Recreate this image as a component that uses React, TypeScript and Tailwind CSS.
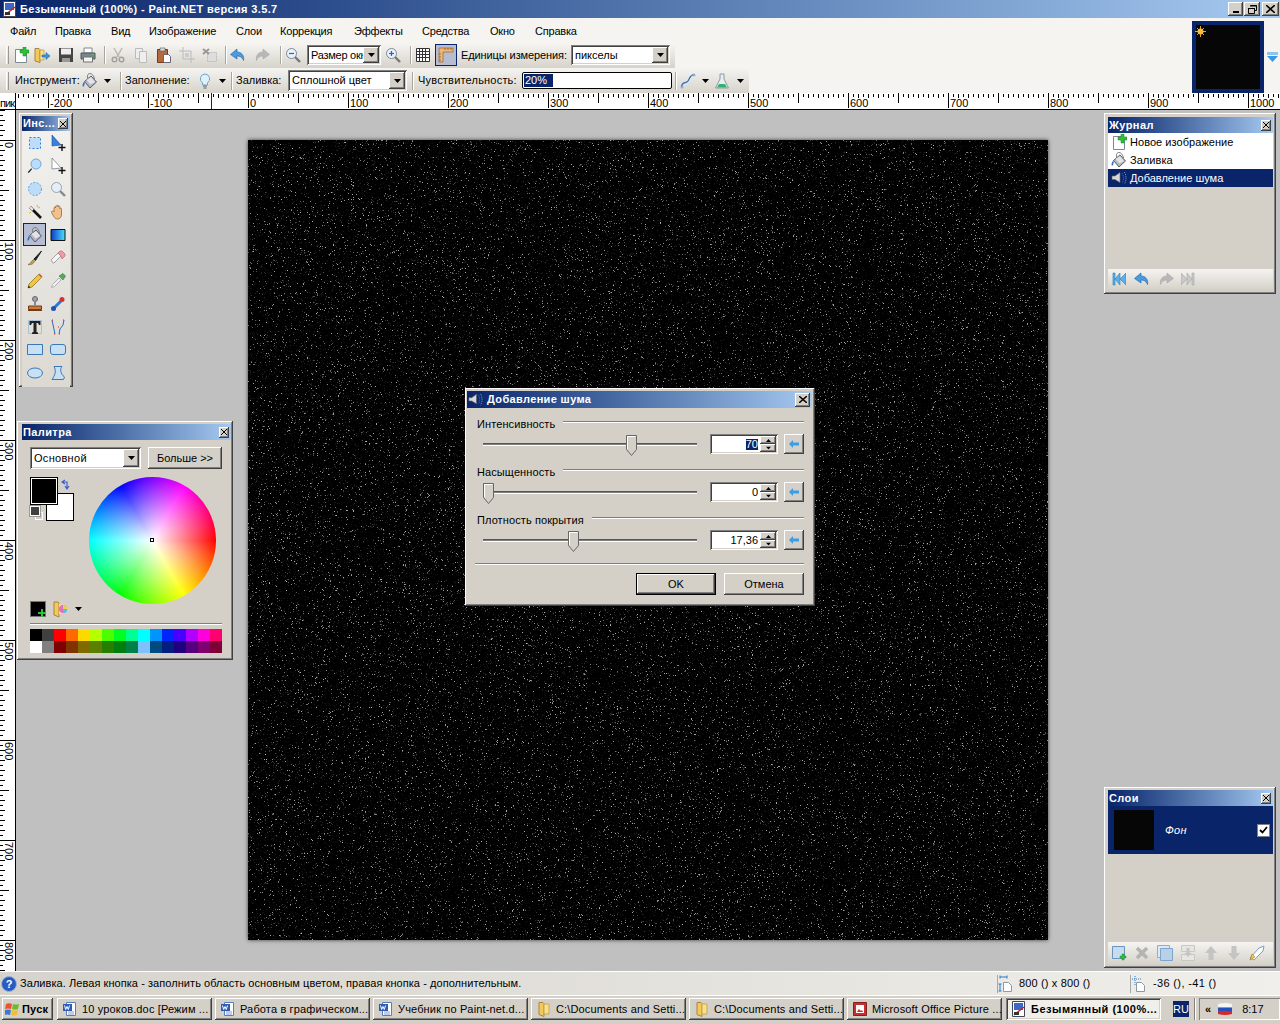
import React, { useEffect, useRef } from 'react';

const RAISED = 'shadow-[inset_-1px_-1px_0_#404040,inset_1px_1px_0_#fff,inset_-2px_-2px_0_#808080]';
const SUNKEN = 'shadow-[inset_1px_1px_0_#808080,inset_-1px_-1px_0_#fff,inset_2px_2px_0_#404040,inset_-2px_-2px_0_#d4d0c8]';
const TITLE = 'bg-gradient-to-r from-[#0a246a] to-[#a6caf0]';
const TOOLBAR = 'bg-gradient-to-b from-[#f5f4f1] to-[#d6d3cb]';

type IconProps = { className?: string; size?: number };

const Svg: React.FC<IconProps & { children: React.ReactNode }> = ({ className = '', size = 16, children }) => (
  <svg width={size} height={size} viewBox="0 0 16 16" className={`shrink-0 ${className}`}>
    {children}
  </svg>
);

const NewIcon = (p: IconProps) => (
  <Svg {...p}>
    <path d="M2.500 2.500h8l3 3v10h-11z" fill="#fff" stroke="#7c8a92" />
    <path d="M10 0h3v3h3v3h-3v3h-3V6H7V3h3z" fill="#2cc23a" stroke="#12801e" strokeWidth=".5" />
  </Svg>
);
const OpenIcon = (p: IconProps) => (
  <Svg {...p}>
    <path d="M1 1.500h4l1 1v13l-5-1.500z" fill="#f3c95c" stroke="#a8853a" />
    <path d="M6 3h4v10H6z" fill="#f8e08e" stroke="#b8963f" strokeWidth=".7" />
    <path d="M8 8h4V5.500L16 9l-4 3.500V10H8z" fill="#3b96dc" stroke="#1d5f9c" strokeWidth=".5" />
  </Svg>
);
const SaveIcon = (p: IconProps) => (
  <Svg {...p}>
    <path d="M1 1h14v14H1z" fill="#454545" />
    <path d="M3 1.500h10v6H3z" fill="#eee" />
    <path d="M4 11h8v4H4z" fill="#9a9a9a" />
  </Svg>
);
const PrintIcon = (p: IconProps) => (
  <Svg {...p}>
    <path d="M4 1h8v5H4z" fill="#fff" stroke="#808890" />
    <path d="M1 6h14v6H1z" fill="#7b858e" stroke="#50585f" />
    <path d="M3.500 10h9v5h-9z" fill="#f4f4f4" stroke="#707070" />
    <path d="M12 7.500h2" stroke="#4fd04f" />
  </Svg>
);
const CutIcon = (p: IconProps) => (
  <Svg {...p}>
    <path d="M4 1l5 9M12 1L7 10" stroke="#999" strokeWidth="1.500" fill="none" />
    <circle cx="4.500" cy="12.500" r="2.300" fill="none" stroke="#777" strokeWidth="1.400" />
    <circle cx="11.500" cy="12.500" r="2.300" fill="none" stroke="#777" strokeWidth="1.400" />
  </Svg>
);
const CopyIcon = (p: IconProps) => (
  <Svg {...p}>
    <path d="M2.500 1.500h7v10h-7z" fill="#eee" stroke="#bbb" />
    <path d="M6.500 4.500h7v11h-7z" fill="#eee" stroke="#bbb" />
  </Svg>
);
const PasteIcon = (p: IconProps) => (
  <Svg {...p}>
    <path d="M1.500 2.500h10v13h-10z" fill="#b46a3c" stroke="#6e3c1c" />
    <path d="M4 1h5v3H4z" fill="#ddd" stroke="#555" strokeWidth=".6" />
    <path d="M7.500 7.500h5l2 2v6h-7z" fill="#fff" stroke="#667" />
  </Svg>
);
const CropIcon = (p: IconProps) => (
  <Svg {...p}>
    <path d="M4 0v12h12M0 4h12v12" stroke="#bbb" fill="none" />
    <path d="M6 6h4v4H6z" fill="#ccc" />
  </Svg>
);
const DeselectIcon = (p: IconProps) => (
  <Svg {...p}>
    <path d="M5.500 5.500h9v9h-9z" fill="#ddd" stroke="#bbb" strokeDasharray="2 1" />
    <path d="M1 2l6 5M7 2L1 7" stroke="#999" strokeWidth="2" />
  </Svg>
);
const UndoIcon = (p: IconProps) => (
  <Svg {...p}>
    <path d="M7 2L.5 7.500 7 12V9c3 0 5 1 6.500 4.500 1-5-2-8.500-6.500-8.500z" fill="#4a9be0" stroke="#1f5fa0" strokeWidth=".6" />
  </Svg>
);
const RedoIcon = (p: IconProps) => (
  <Svg {...p}>
    <path d="M9 2l6.500 5.500L9 12V9c-3 0-5 1-6.500 4.500C1.500 8.500 4.500 5 9 5z" fill="#b8b8b8" stroke="#a8a8a8" strokeWidth=".6" />
  </Svg>
);
const ZoomIcon = ({ plus, ...p }: IconProps & { plus?: boolean }) => (
  <Svg {...p}>
    <path d="M10 10l5 5" stroke="#777" strokeWidth="2.400" />
    <circle cx="6.500" cy="6.500" r="5" fill="#e8f2fb" stroke="#7c8a98" />
    <path d="M4 6.500h5" stroke="#2a62c0" strokeWidth="1.200" />
    {plus && <path d="M6.500 4v5" stroke="#2a62c0" strokeWidth="1.200" />}
  </Svg>
);
const GridIcon = (p: IconProps) => (
  <Svg {...p}>
    <path d="M1.500 1.500h13v13h-13zM4.500 1.500v13M7.500 1.500v13M10.500 1.500v13M1.500 4.500h13M1.500 7.500h13M1.500 10.500h13" fill="#fff" stroke="#333" />
  </Svg>
);
const RulerIcon = (p: IconProps) => (
  <Svg {...p}>
    <path d="M1 1h14v4H5v10H1z" fill="#f0b878" stroke="#a06c30" strokeWidth=".8" />
    <path d="M7 1v2M10 1v2M13 1v2M1 7h2M1 10h2M1 13h2" stroke="#7c4c18" strokeWidth=".7" />
  </Svg>
);
const BucketIcon = (p: IconProps) => (
  <Svg {...p}>
    <path d="M2.500 8.500L9 3l5.500 6L8 15z" fill="#b4b7c0" stroke="#5c5e66" />
    <path d="M4.500 7L8.500 11.500 13 9 9 4z" fill="#e2e4ea" />
    <path d="M6 6C4.500 3 6 .5 8 .5s4 2.500 4.500 5.500" fill="none" stroke="#77797f" />
    <path d="M2.500 8.500C.5 10 0 13 1 14c1.500-1 2-3.500 1.500-5.500z" fill="#2f6fd0" />
  </Svg>
);
const BulbIcon = (p: IconProps) => (
  <Svg {...p}>
    <path d="M8 1a4.800 4.800 0 0 0-2.500 8.800V12h5V9.800A4.800 4.800 0 0 0 8 1z" fill="#dff0fb" stroke="#6ca6cc" />
    <path d="M6 13h4M6.500 15h3" stroke="#888" strokeWidth="1.300" />
  </Svg>
);
const CurveIcon = (p: IconProps) => (
  <Svg {...p}>
    <path d="M1.500 14C2 8 6 11 8 8s2-6 6-6.500" fill="none" stroke="#2a6bc0" strokeWidth="1.200" />
    <circle cx="2" cy="14" r="1" fill="#fff" stroke="#2a6bc0" strokeWidth=".6" />
    <circle cx="14" cy="2" r="1" fill="#fff" stroke="#2a6bc0" strokeWidth=".6" />
  </Svg>
);
const FlaskIcon = (p: IconProps) => (
  <Svg {...p}>
    <path d="M6 1h4v5l4.500 9h-13L6 6z" fill="#e6eef2" stroke="#8a9aa4" />
    <path d="M5 11h6l2 3.500H3z" fill="#32b070" />
  </Svg>
);
const Caret = ({ className = '' }: { className?: string }) => (
  <svg width="7" height="4" viewBox="0 0 7 4" className={`shrink-0 ${className}`}>
    <path d="M0 0h7L3.500 4z" fill="#000" />
  </svg>
);
const NoiseIcon = (p: IconProps) => (
  <Svg {...p}>
    <path d="M1 6h3l5-3.500v10L4 9.500H1z" fill="#d8d8d8" stroke="#666" strokeWidth=".6" />
    <path d="M11 3c2 3 2 7 0 10" fill="none" stroke="#3f6fd0" strokeDasharray="1 1" />
    <path d="M13.500 2c2 4 2 8 0 12" fill="none" stroke="#7da0e0" strokeDasharray="1 1" />
  </Svg>
);

function ZoomNoSign() {
  return (
    <Svg>
      <path d="M10 10l5 5" stroke="#888" strokeWidth="2.400" />
      <circle cx="6.500" cy="6.500" r="5" fill="#e4eef8" stroke="#9aa4ae" />
    </Svg>
  );
}

/* Tool window icons */
const T = {
  RectSel: (
    <Svg><path d="M2.500 2.500h11v11h-11z" fill="#bcdcf8" stroke="#2a7be8" strokeDasharray="2 2" /></Svg>
  ),
  Move: (
    <Svg>
      <path d="M2 0v11l9-1z" fill="#3a7fd8" stroke="#1d4f9c" strokeWidth=".6" />
      <path d="M12 9v7M8.500 12.500h7" stroke="#111" strokeWidth="1.400" />
    </Svg>
  ),
  Lasso: (
    <Svg>
      <circle cx="9" cy="6" r="5" fill="#bcdcf8" stroke="#6aa8e0" />
      <path d="M5 11c-2 0-1 2-4 3.500" fill="none" stroke="#222" strokeWidth="1.200" />
    </Svg>
  ),
  MoveSel: (
    <Svg>
      <path d="M2 0v11l9-1z" fill="#fff" stroke="#6a7480" strokeWidth=".7" />
      <path d="M12 9v7M8.500 12.500h7" stroke="#111" strokeWidth="1.400" />
    </Svg>
  ),
  EllSel: (
    <Svg><circle cx="8" cy="8" r="6.500" fill="#bcdcf8" stroke="#5aa0ea" strokeDasharray="2 1.500" /></Svg>
  ),
  Zoom: <ZoomNoSign />,
  Wand: (
    <Svg>
      <path d="M3 3l11 11" stroke="#111" strokeWidth="2.600" />
      <path d="M3 3l3 3" stroke="#eee" strokeWidth="2.200" />
      <path d="M10 1l.5 2M13 3l-2 1M2 9l2-.5" stroke="#e0c020" strokeWidth="1.200" />
    </Svg>
  ),
  Hand: (
    <Svg>
      <path d="M4 8V4c0-1 1.500-1 1.500 0V2.500c0-1 1.500-1 1.500 0V2c0-1 1.500-1 1.500 0v1c0-1 1.500-1 1.500 0v2c0-1 1.500-1 1.500 0v6c0 2-1.500 4-4 4-2 0-3-1-4-3L1.500 8.500C1 7 3 6.500 4 8z" fill="#f2c08a" stroke="#9a6a38" strokeWidth=".8" />
    </Svg>
  ),
  Bucket: <BucketIcon />,
  Gradient: (
    <Svg>
      <defs>
        <linearGradient id="gr1" x1="0" y1="0" x2="1" y2="0">
          <stop offset="0" stopColor="#0a3cc8" />
          <stop offset="1" stopColor="#4fe0ff" />
        </linearGradient>
      </defs>
      <path d="M1 2.500h14v11H1z" fill="url(#gr1)" stroke="#111" />
    </Svg>
  ),
  Brush: (
    <Svg>
      <path d="M14.500 1L7 9l1.500 1.500z" fill="#222" stroke="#222" />
      <path d="M6.500 9.500L4 12c-.5 1.500-2 2-3 2.500 2.500.5 5 0 6.500-3z" fill="#c89a58" stroke="#7a5a28" strokeWidth=".6" />
    </Svg>
  ),
  Eraser: (
    <Svg>
      <path d="M1 10l7-7 3 3-7 7H3z" fill="#f4f4f4" stroke="#a0a0a0" />
      <path d="M8 3l2-2h2l3 3v2l-3 3-1-3z" fill="#f09aa8" stroke="#c06878" strokeWidth=".7" />
    </Svg>
  ),
  Pencil: (
    <Svg>
      <path d="M1 15l1-4L11.500 1.500l3 3L5 14z" fill="#f0c840" stroke="#8a6c18" strokeWidth=".7" />
      <path d="M11.500 1.500l3 3 1-1-3-3z" fill="#e05050" />
      <path d="M1 15l.6-2.500 1.900 1.900z" fill="#222" />
    </Svg>
  ),
  Dropper: (
    <Svg>
      <path d="M1.500 14.500l1-3L9 5l2 2-6.500 6.500z" fill="#eee" stroke="#b0b0b0" />
      <path d="M9 3l4-2.500 2.500 2.500L13 7z" fill="#58a85c" stroke="#3a7c3e" strokeWidth=".6" />
    </Svg>
  ),
  Stamp: (
    <Svg>
      <circle cx="8" cy="3" r="2.500" fill="#a0a4a8" stroke="#666" />
      <path d="M7 5h2v4H7z" fill="#888" />
      <path d="M1.500 10h13v3.500h-13z" fill="#c87a40" stroke="#703c14" />
      <path d="M1 14.500h14" stroke="#703c14" />
    </Svg>
  ),
  Recolor: (
    <Svg>
      <path d="M4 12l7-7" stroke="#2b78d8" strokeWidth="3" />
      <circle cx="12" cy="3.500" r="2.500" fill="#d83030" />
      <circle cx="3.500" cy="12.500" r="2.500" fill="#2050b8" />
    </Svg>
  ),
  Text: (
    <Svg>
      <path d="M1.500 1.500h13v13h-13z" fill="none" stroke="#a8c0d8" />
      <path d="M2.500 2h11v4h-1.500L11 4H9.500v9l1.500.5V15H5v-1.500l1.500-.5V4H5L4 6H2.500z" fill="#222" />
    </Svg>
  ),
  Line: (
    <Svg>
      <path d="M2 1l3 14M14 1l-1 5-3 4-1 5" fill="none" stroke="#2a6bc0" />
      <path d="M2 1h1M5 15h-1M14 1h-1M9 15h1M8 8h1" stroke="#e02020" />
    </Svg>
  ),
  Rect: <Svg><path d="M.5 2.500h15v10H.5z" fill="#c8e0f4" stroke="#3a78b8" /></Svg>,
  RoundRect: <Svg><rect x=".5" y="2.500" width="15" height="10" rx="2.500" fill="#c8e0f4" stroke="#3a78b8" /></Svg>,
  Ellipse: <Svg><ellipse cx="8" cy="8" rx="7.500" ry="5" fill="#c8e0f4" stroke="#3a78b8" /></Svg>,
  Free: (
    <Svg><path d="M4 1.500h8c-2 2-2 7 2.500 10.500l-1 2.500H2c3-4 4.500-9 2-13z" fill="#c8e0f4" stroke="#3a78b8" /></Svg>
  ),
};

const toolOrder = [
  T.RectSel, T.Move, T.Lasso, T.MoveSel, T.EllSel, T.Zoom, T.Wand, T.Hand, T.Bucket, T.Gradient, T.Brush,
  T.Eraser, T.Pencil, T.Dropper, T.Stamp, T.Recolor, T.Text, T.Line, T.Rect, T.RoundRect, T.Ellipse, T.Free,
];

const menus: [string, string][] = [
  ['Файл', 'w-[45px]'], ['Правка', 'w-[56px]'], ['Вид', 'w-[38px]'], ['Изображение', 'w-[87px]'], ['Слои', 'w-[44px]'],
  ['Коррекция', 'w-[74px]'], ['Эффекты', 'w-[68px]'], ['Средства', 'w-[68px]'], ['Окно', 'w-[45px]'], ['Справка', 'w-[60px]'],
];

const topColors = ['#000000', '#404040', '#ff0000', '#ff6a00', '#ffd800', '#b6ff00', '#4cff00', '#00ff21', '#00ff90', '#00ffff', '#0094ff', '#0026ff', '#4800ff', '#b200ff', '#ff00dc', '#ff006e'];
const bottomColors = ['#ffffff', '#808080', '#7f0000', '#7f3300', '#7f6a00', '#5b7f00', '#267f00', '#007f0e', '#007f46', '#7fc0ff', '#004a7f', '#001f7f', '#21007f', '#57007f', '#7f006e', '#7f0037'];

const Grip = () => <div className="ml-[6px] h-[18px] w-[3px] shrink-0 border-l border-r border-l-white border-r-[#9a9890]" />;
const Sep = ({ className = '' }: { className?: string }) => (
  <div className={`h-[18px] w-[2px] shrink-0 border-l border-r border-l-[#a8a69e] border-r-white ${className}`} />
);

const Combo = ({ text, className = '' }: { text: string; className?: string }) => (
  <div className={`flex items-center bg-white p-[2px] ${SUNKEN} ${className}`}>
    <span className="flex-1 overflow-hidden whitespace-nowrap pl-[2px] text-[11px] leading-none text-black">{text}</span>
    <div className={`flex h-full w-[16px] shrink-0 items-center justify-center bg-[#d4d0c8] ${RAISED}`}>
      <Caret />
    </div>
  </div>
);

const CloseBox = () => (
  <div className={`flex h-[11px] w-[10px] shrink-0 items-center justify-center bg-[#d4d0c8] ${RAISED}`}>
    <svg width="6" height="6" viewBox="0 0 6 6">
      <path d="M0 0l6 6M6 0L0 6" stroke="#000" />
    </svg>
  </div>
);

const TitleStrip = ({ title, className = '' }: { title: string; className?: string }) => (
  <div className={`flex items-center justify-between pl-[1px] pr-[2px] ${TITLE} ${className}`}>
    <span className="whitespace-nowrap text-[11px] font-bold tracking-[0.4px] text-white">{title}</span>
    <CloseBox />
  </div>
);

const CaptionButton = ({ children, className = '' }: { children: React.ReactNode; className?: string }) => (
  <div className={`flex h-[14px] items-center justify-center bg-[#d4d0c8] ${RAISED} ${className}`}>{children}</div>
);

/* Horizontal ruler drawn over the whole window width */
const TopRuler = () => {
  const ticks: string[] = [];
  const labels: { x: number; v: number }[] = [];
  for (let v = -230; v <= 1035; v += 5) {
    const x = 248 + v;
    if (x < 16) continue;
    if (v % 100 === 0) {
      ticks.push(`M${x + 0.5} 0v15`);
      labels.push({ x, v });
    } else if (v % 50 === 0) ticks.push(`M${x + 0.5} 0v10`);
    else if (v % 10 === 0) ticks.push(`M${x + 0.5} 1v4`);
    else ticks.push(`M${x + 0.5} 1v3`);
  }
  return (
    <svg width="1280" height="17" viewBox="0 0 1280 17" shapeRendering="crispEdges" className="block shrink-0 bg-white">
      <path d={ticks.join('')} stroke="#000" fill="none" />
      <path d="M211.500 0v16" stroke="#0a246a" />
      {labels.map((l) => (
        <text key={l.x} x={l.x + 2} y={14} fontSize="11" fill="#000" fontFamily="Liberation Sans, sans-serif">
          {l.v}
        </text>
      ))}
      <rect x="0" y="0" width="15" height="16" fill="#fff" />
      <text x="0" y={14} fontSize="11" fill="#000" fontFamily="Liberation Sans, sans-serif" textLength="15">
        пик
      </text>
      <path d="M15.500 0v16M0 16.500h1280" stroke="#000" />
    </svg>
  );
};

const LeftRuler = () => {
  const ticks: string[] = [];
  const labels: { y: number; v: number }[] = [];
  for (let v = -30; v <= 835; v += 5) {
    const y = 30 + v;
    if (v % 100 === 0) {
      ticks.push(`M0 ${y + 0.5}h15`);
      labels.push({ y, v });
    } else if (v % 50 === 0) ticks.push(`M0 ${y + 0.5}h9`);
    else if (v % 10 === 0) ticks.push(`M0 ${y + 0.5}h5`);
    else ticks.push(`M0 ${y + 0.5}h3`);
  }
  return (
    <svg width="16" height="861" viewBox="0 0 16 861" shapeRendering="crispEdges" className="block shrink-0 bg-white">
      <path d={ticks.join('')} stroke="#000" fill="none" />
      {labels.map((l) => (
        <text key={l.y} transform={`translate(5 ${l.y + 2}) rotate(90)`} fontSize="11" fill="#000" fontFamily="Liberation Sans, sans-serif">
          {l.v}
        </text>
      ))}
      <path d="M15.500 0v861" stroke="#000" />
    </svg>
  );
};

/* The noise layer the effect produces on the black canvas */
const NoiseCanvas = () => {
  const ref = useRef<HTMLCanvasElement>(null);
  useEffect(() => {
    const ctx = ref.current?.getContext('2d');
    if (!ctx) return;
    const img = ctx.createImageData(800, 800);
    let s = 12345;
    const rnd = () => {
      s = (s + 0x6d2b79f5) | 0;
      let t = Math.imul(s ^ (s >>> 15), 1 | s);
      t = (t + Math.imul(t ^ (t >>> 7), 61 | t)) ^ t;
      return ((t ^ (t >>> 14)) >>> 0) / 4294967296;
    };
    for (let i = 0; i < 640000; i++) {
      const on = rnd() < 0.17;
      const r = rnd();
      const v = on ? 10 + Math.pow(r, 5) * 170 : 0;
      img.data[i * 4] = v;
      img.data[i * 4 + 1] = v;
      img.data[i * 4 + 2] = v;
      img.data[i * 4 + 3] = 255;
    }
    ctx.putImageData(img, 0, 0);
  }, []);
  return <canvas ref={ref} width={800} height={800} className="block shadow-[0_0_4px_rgba(0,0,0,0.7)]" />;
};

const ToolsWindow = () => (
  <div className={`absolute left-[19px] top-[113px] flex h-[274px] w-[54px] flex-col bg-[#d4d0c8] pl-[3px] pr-[3px] pt-[3px] ${RAISED}`}>
    <TitleStrip title="Инс..." className="h-[15px]" />
    <div className="flex-1 bg-gradient-to-b from-[#f2f1ee] to-[#dcd9d2] pb-[3px]">
      <div className="grid grid-cols-[23px_23px] grid-rows-[repeat(11,23px)] pl-px">
        {toolOrder.map((icon, i) => (
          <div
            key={i}
            className={i === 8 ? 'flex items-center justify-center border border-[#0a246a] bg-[#b6bdd2]' : 'flex items-center justify-center'}
          >
            {icon}
          </div>
        ))}
      </div>
    </div>
  </div>
);

const PaletteWindow = () => (
  <div className={`absolute left-[17px] top-[421px] flex h-[239px] w-[216px] flex-col bg-[#d4d0c8] pl-[5px] pr-[2px] pt-[3px] ${RAISED}`}>
    <TitleStrip title="Палитра" className="h-[16px]" />
    <div className="flex flex-col pl-[8px] pr-[9px] pt-[7px]">
      <div className="flex items-start">
        <Combo text="Основной" className="h-[22px] w-[111px] tracking-[0.3px]" />
        <div className={`ml-[7px] flex h-[22px] w-[74px] items-center justify-center bg-[#d4d0c8] text-[11px] text-black ${RAISED}`}>
          Больше &gt;&gt;
        </div>
      </div>
      <div className="mt-[8px] flex">
        <div className="relative h-[127px] w-[59px] shrink-0">
          <div className="absolute left-[16px] top-[16px] h-[28px] w-[28px] border border-black bg-white" />
          <div className="absolute left-0 top-0 h-[28px] w-[28px] border border-black bg-black shadow-[inset_0_0_0_1px_#fff]" />
          <svg width="10" height="12" viewBox="0 0 10 12" className="absolute left-[31px] top-[2px]">
            <path d="M1 3h5v6M4 1L1 3l3 2M4 7l2 3 2-3" fill="none" stroke="#3a5ed0" strokeWidth="1.200" />
          </svg>
          <div className="absolute left-[5px] top-[35px] h-[8px] w-[8px] border border-white bg-[#d4d0c8]" />
          <div className="absolute left-0 top-[29px] h-[10px] w-[10px] border border-white bg-[#404040] outline outline-[#999]" />
        </div>
        <div className="relative h-[127px] w-[127px] rounded-full bg-[conic-gradient(from_90deg,#f00,#ff0,#0f0,#0ff,#00f,#f0f,#f00)]">
          <div className="absolute inset-0 rounded-full bg-[radial-gradient(closest-side,#fff,rgba(255,255,255,0))]" />
          <div className="absolute left-[61px] top-[61px] h-[4px] w-[4px] border border-black bg-white" />
        </div>
      </div>
      <div className="mt-[-4px] flex h-[18px] items-center">
        <div className="relative h-[16px] w-[16px] border border-[#777] bg-black">
          <svg width="8" height="8" viewBox="0 0 8 8" className="absolute bottom-[-1px] right-[-1px]">
            <path d="M3 0h2v3h3v2H5v3H3V5H0V3h3z" fill="#2cc23a" />
          </svg>
        </div>
        <svg width="15" height="17" viewBox="0 0 15 17" className="ml-[7px] shrink-0">
          <path d="M1 1h4l1 1v14l-5-2z" fill="#f3c95c" stroke="#a8853a" />
          <path d="M6 3h3v10H6z" fill="#f8e08e" />
          <circle cx="10" cy="8" r="4" fill="#e070c0" />
          <path d="M10 4a4 4 0 0 1 4 4h-4z" fill="#f0d040" />
          <path d="M10 8h4a4 4 0 0 1-4 4z" fill="#50c0e0" />
        </svg>
        <Caret className="ml-[7px]" />
      </div>
      <div className="mt-[5px] h-[2px] border-b border-t border-b-white border-t-[#808080]" />
      <div className="mt-[4px] grid grid-cols-[repeat(16,12px)] grid-rows-[12px_12px]">
        {topColors.concat(bottomColors).map((c) => (
          <div key={c} className="h-full w-full" style={{ backgroundColor: c }} />
        ))}
      </div>
    </div>
  </div>
);

const JournalWindow = () => (
  <div className={`absolute left-[1104px] top-[113px] flex h-[181px] w-[172px] flex-col bg-[#d4d0c8] pl-[4px] pr-[3px] pt-[4px] ${RAISED}`}>
    <TitleStrip title="Журнал" className="h-[16px]" />
    <div className="bg-white text-[11px] text-black">
      <div className="flex h-[18px] items-center pl-[3px]">
        <NewIcon />
        <span className="ml-[3px] tracking-[0.05px]">Новое изображение</span>
      </div>
      <div className="flex h-[18px] items-center pl-[3px]">
        <BucketIcon />
        <span className="ml-[3px] tracking-[0.05px]">Заливка</span>
      </div>
      <div className="flex h-[18px] items-center bg-[#0a246a] pl-[3px] text-white">
        <NoiseIcon />
        <span className="ml-[3px]">Добавление шума</span>
      </div>
    </div>
    <div className="flex-1" />
    <div className={`mb-[5px] flex h-[20px] items-center pl-[4px] ${TOOLBAR}`}>
      <svg width="14" height="14" viewBox="0 0 14 14" className="shrink-0">
        <path d="M1 1h2v12H1zM8 1v12L3 7zM14 1v12L8 7z" fill="#5ab0e8" stroke="#2f7cb8" strokeWidth=".6" />
      </svg>
      <UndoIcon className="ml-[8px]" />
      <RedoIcon className="ml-[8px]" />
      <svg width="14" height="14" viewBox="0 0 14 14" className="ml-[7px] shrink-0">
        <path d="M13 1h-2v12h2zM6 1v12l5-6zM0 1v12l6-6z" fill="#c8c8c8" stroke="#a8a8a8" strokeWidth=".6" />
      </svg>
    </div>
  </div>
);

const LayersWindow = () => (
  <div className={`absolute left-[1104px] top-[787px] flex h-[181px] w-[172px] flex-col bg-[#d4d0c8] pl-[4px] pr-[3px] pt-[3px] ${RAISED}`}>
    <TitleStrip title="Слои" className="h-[16px]" />
    <div className="flex h-[48px] items-center bg-[#0a246a] pl-[6px] text-white">
      <div className="h-[40px] w-[40px] shrink-0 bg-[#060606]" />
      <span className="ml-[11px] flex-1 text-[11px] italic tracking-[0.3px]">Фон</span>
      <div className="mr-[3px] flex h-[13px] w-[13px] items-center justify-center border border-[#808080] bg-white">
        <svg width="9" height="8" viewBox="0 0 9 8">
          <path d="M1 4l2.500 2.500L8 1" fill="none" stroke="#000" strokeWidth="1.800" />
        </svg>
      </div>
    </div>
    <div className="flex-1" />
    <div className={`mb-[4px] flex h-[22px] items-center pl-[4px] ${TOOLBAR}`}>
      <svg width="16" height="16" viewBox="0 0 16 16" className="shrink-0">
        <path d="M.5 1.500h12v12H.5z" fill="#c8dcf0" stroke="#6c94bc" />
        <path d="M10 9h2v2h2v2h-2v2h-2v-2H8v-2h2z" fill="#2cc23a" stroke="#12801e" strokeWidth=".4" />
      </svg>
      <svg width="16" height="16" viewBox="0 0 16 16" className="ml-[6px] shrink-0">
        <path d="M3 3l10 10M13 3L3 13" stroke="#b4b4b4" strokeWidth="3.600" />
      </svg>
      <svg width="16" height="16" viewBox="0 0 16 16" className="ml-[7px] shrink-0">
        <path d="M.5.5h12v12H.5z" fill="#dce8f4" stroke="#8cb0d4" />
        <path d="M3.500 3.500h12v12h-12z" fill="#b8d0e8" stroke="#7ca4cc" />
      </svg>
      <svg width="16" height="16" viewBox="0 0 16 16" className="ml-[7px] shrink-0">
        <path d="M1.500.5h13v6h-13zM1.500 9.500h13v6h-13z" fill="#e6e6e2" stroke="#c8c8c4" />
        <path d="M6.500 3h3v5h2L8 12 4.500 8h2z" fill="#c4c4c4" />
      </svg>
      <svg width="16" height="16" viewBox="0 0 16 16" className="ml-[7px] shrink-0">
        <path d="M8 1l6 7h-3.500v7h-5V8H2z" fill="#c4c4c4" />
      </svg>
      <svg width="16" height="16" viewBox="0 0 16 16" className="ml-[7px] shrink-0">
        <path d="M8 15l6-7h-3.500V1h-5v7H2z" fill="#c4c4c4" />
      </svg>
      <svg width="16" height="16" viewBox="0 0 16 16" className="ml-[7px] shrink-0">
        <path d="M1 13L10 3l5-2-1 5-9 9z" fill="#fff" stroke="#78a0b8" />
        <path d="M1 15l2-6 3 3z" fill="#f0c840" stroke="#8a6c18" strokeWidth=".5" />
      </svg>
    </div>
  </div>
);

const sliders = [
  { label: 'Интенсивность', value: '70', thumb: 'left-[143px]', selected: true },
  { label: 'Насыщенность', value: '0', thumb: 'left-0', selected: false },
  { label: 'Плотность покрытия', value: '17,36', thumb: 'left-[85px]', selected: false },
];

const NoiseDialog = () => (
  <div className={`absolute left-[465px] top-[388px] flex h-[218px] w-[350px] flex-col bg-[#d4d0c8] pl-[2px] pr-[3px] pt-[3px] ${RAISED}`}>
    <div className={`flex h-[17px] shrink-0 items-center pr-[2px] ${TITLE}`}>
      <NoiseIcon className="ml-[1px]" size={15} />
      <span className="ml-[4px] flex-1 text-[11px] font-bold tracking-[0.35px] text-white">Добавление шума</span>
      <div className={`flex h-[14px] w-[15px] items-center justify-center bg-[#d4d0c8] ${RAISED}`}>
        <svg width="8" height="7" viewBox="0 0 8 7">
          <path d="M0 0l8 7M8 0L0 7" stroke="#000" strokeWidth="1.400" />
        </svg>
      </div>
    </div>
    <div className="flex flex-col pl-[8px] pr-[8px] pt-[9px]">
      {sliders.map((s) => (
        <div key={s.label} className="mb-[11px] flex flex-col">
          <div className="flex h-[14px] items-center">
            <span className="ml-[2px] whitespace-nowrap text-[11px] tracking-[0.1px] text-black">{s.label}</span>
            <div className="ml-[8px] mt-[-4px] h-[2px] flex-1 border-b border-t border-b-white border-t-[#808080]" />
          </div>
          <div className="mt-[3px] flex h-[20px] items-center">
            <div className="relative ml-[8px] h-[3px] w-[214px] border-b border-t border-b-white border-t-[#555] bg-[#808080]">
              <svg width="11" height="21" viewBox="0 0 11 21" className={`absolute top-[-9px] ${s.thumb}`}>
                <path d="M.5.5h10v14l-5 6-5-6z" fill="#d4d0c8" stroke="#666" />
                <path d="M1.500 1.500h8" stroke="#fff" />
                <path d="M1.500 1.500v12.500" stroke="#fff" />
              </svg>
            </div>
            <div className={`ml-[13px] flex h-[20px] w-[68px] items-center bg-white p-[2px] ${SUNKEN}`}>
              <span className="flex flex-1 justify-end pr-[2px] text-[11px] leading-none text-black">
                <span className={s.selected ? 'bg-[#0a246a] text-white' : ''}>{s.value}</span>
              </span>
              <div className="flex h-full w-[16px] flex-col">
                <div className={`flex flex-1 items-center justify-center bg-[#d4d0c8] ${RAISED}`}>
                  <svg width="5" height="3" viewBox="0 0 5 3"><path d="M2.500 0L5 3H0z" /></svg>
                </div>
                <div className={`flex flex-1 items-center justify-center bg-[#d4d0c8] ${RAISED}`}>
                  <Caret className="scale-75" />
                </div>
              </div>
            </div>
            <div className={`ml-[6px] flex h-[20px] w-[20px] items-center justify-center bg-[#d4d0c8] ${RAISED}`}>
              <svg width="10" height="8" viewBox="0 0 10 8">
                <path d="M0 4l4-4v2.500h6v3H4V8z" fill="#3b9ee0" />
              </svg>
            </div>
          </div>
        </div>
      ))}
      <div className="mt-[2px] h-[2px] border-b border-t border-b-white border-t-[#808080]" />
      <div className="mt-[8px] flex justify-end gap-[8px] text-[11px] text-black">
        <div className={`flex h-[22px] w-[80px] items-center justify-center border border-black bg-[#d4d0c8] ${RAISED}`}>OK</div>
        <div className={`flex h-[22px] w-[80px] items-center justify-center bg-[#d4d0c8] ${RAISED}`}>Отмена</div>
      </div>
    </div>
  </div>
);

const WordIcon = () => (
  <svg width="16" height="16" viewBox="0 0 16 16" className="shrink-0">
    <path d="M4.500 1.500h9v13h-9z" fill="#fff" stroke="#5a7cb8" />
    <path d="M6 11h6M6 13h6" stroke="#7c9cd0" />
    <path d="M1 3h9v7H1z" fill="#2a5cb8" />
    <path d="M2.500 4.500l1.200 4 1.300-3 1.300 3 1.200-4" fill="none" stroke="#fff" />
  </svg>
);
const FolderIcon = () => (
  <svg width="16" height="16" viewBox="0 0 16 16" className="shrink-0">
    <path d="M3 1.500h4l1 1v13l-5-2z" fill="#f3c95c" stroke="#a8853a" />
    <path d="M8 3h5v10H8z" fill="#f8e08e" stroke="#c8a850" />
  </svg>
);
const PictureIcon = () => (
  <svg width="16" height="16" viewBox="0 0 16 16" className="shrink-0">
    <path d="M1.500 1.500h13v13h-13z" fill="#c83030" stroke="#802020" />
    <path d="M4 4h8v8H4z" fill="#fff" />
    <path d="M5 11l2-3 2 2 1-1 1 2z" fill="#c83030" />
  </svg>
);
const PdnIcon = () => (
  <svg width="16" height="16" viewBox="0 0 16 16" className="shrink-0">
    <path d="M1.500.5h12v15h-12z" fill="#fff" stroke="#445" />
    <path d="M3 2h9v7H3z" fill="#3a68c8" />
    <path d="M3 14L13 6" stroke="#c82020" strokeWidth="1.500" />
    <path d="M3 11h5v3H3z" fill="#333" />
  </svg>
);

const tasks = [
  { icon: <WordIcon />, text: '10 уроков.doc [Режим ...' },
  { icon: <WordIcon />, text: 'Работа в графическом...' },
  { icon: <WordIcon />, text: 'Учебник по Paint-net.d...' },
  { icon: <FolderIcon />, text: 'C:\\Documents and Setti...' },
  { icon: <FolderIcon />, text: 'C:\\Documents and Setti...' },
  { icon: <PictureIcon />, text: 'Microsoft Office Picture ...' },
];

export default function App() {
  return (
    <div className="relative flex h-[1024px] w-[1280px] flex-col overflow-hidden bg-[#d4d0c8] text-[11px] text-black [font-family:'Liberation_Sans',sans-serif]">
      {/* title bar */}
      <div className={`flex h-[18px] shrink-0 items-center ${TITLE}`}>
        <div className="ml-[2px] mr-[2px]">
          <PdnIcon />
        </div>
        <span className="flex-1 whitespace-nowrap text-[11px] font-bold tracking-[0.36px] text-white">
          Безымянный (100%) - Paint.NET версия 3.5.7
        </span>
        <CaptionButton className="w-[15px]">
          <div className="mt-[6px] h-[2px] w-[6px] bg-black" />
        </CaptionButton>
        <CaptionButton className="ml-[1px] w-[16px]">
          <svg width="9" height="9" viewBox="0 0 9 9">
            <path d="M2.500.5h6v5h-2M.5 3.500h6v5h-6z" fill="none" stroke="#000" />
            <path d="M2 1h7M0 3.500h7" stroke="#000" />
          </svg>
        </CaptionButton>
        <CaptionButton className="ml-[2px] mr-[1px] w-[17px]">
          <svg width="9" height="8" viewBox="0 0 9 8">
            <path d="M0 0l9 8M9 0L0 8" stroke="#000" strokeWidth="1.600" />
          </svg>
        </CaptionButton>
      </div>

      {/* menus and toolbars */}
      <div className="flex h-[75px] shrink-0 bg-[#f5f4f1]">
        <div className="flex flex-1 flex-col">
          <div className="flex h-[26px] items-center pl-[10px]">
            {menus.map(([m, w]) => (
              <span key={m} className={`${w} tracking-[-0.2px]`}>
                {m}
              </span>
            ))}
          </div>
          <div className={`flex h-[24px] w-[675px] items-center pb-[2px] ${TOOLBAR}`}>
            <Grip />
            <NewIcon className="ml-[4px]" />
            <OpenIcon className="ml-[5px]" />
            <SaveIcon className="ml-[8px]" />
            <PrintIcon className="ml-[6px]" />
            <Sep className="ml-[8px]" />
            <CutIcon className="ml-[4px] opacity-60" />
            <CopyIcon className="ml-[7px]" />
            <PasteIcon className="ml-[7px]" />
            <CropIcon className="ml-[7px]" />
            <DeselectIcon className="ml-[7px]" />
            <Sep className="ml-[7px]" />
            <UndoIcon className="ml-[3px]" />
            <RedoIcon className="ml-[8px]" />
            <Sep className="ml-[10px]" />
            <ZoomIcon className="ml-[3px]" />
            <Combo text="Размер окна" className="ml-[6px] h-[20px] w-[74px] tracking-[-0.25px]" />
            <ZoomIcon plus className="ml-[4px]" />
            <Sep className="ml-[9px]" />
            <GridIcon className="ml-[3px]" />
            <div className="ml-[4px] flex h-[22px] w-[22px] shrink-0 items-center justify-center border border-[#0a246a] bg-[#b6bdd2]">
              <RulerIcon />
            </div>
            <span className="ml-[4px] w-[110px] shrink-0 whitespace-nowrap tracking-[-0.1px]">Единицы измерения:</span>
            <Combo text="пикселы" className="h-[20px] w-[99px]" />
          </div>
          <div className={`flex h-[25px] w-[749px] items-center ${TOOLBAR}`}>
            <Grip />
            <span className="ml-[6px] w-[64px] shrink-0 whitespace-nowrap tracking-[0.1px]">Инструмент:</span>
            <BucketIcon className="ml-[3px]" />
            <Caret className="ml-[6px]" />
            <Sep className="ml-[9px]" />
            <span className="ml-[3px] w-[65px] shrink-0 whitespace-nowrap">Заполнение:</span>
            <BulbIcon className="ml-[7px]" />
            <Caret className="ml-[6px]" />
            <Sep className="ml-[5px]" />
            <span className="ml-[3px] w-[49px] shrink-0 whitespace-nowrap">Заливка:</span>
            <Combo text="Сплошной цвет" className="ml-[3px] h-[21px] w-[119px]" />
            <Sep className="ml-[5px]" />
            <span className="ml-[4px] w-[104px] shrink-0 whitespace-nowrap tracking-[0.2px]">Чувствительность:</span>
            <div className="flex h-[17px] w-[150px] shrink-0 items-center rounded-[2px] border border-black bg-white px-px">
              <div className="flex h-[13px] w-[29px] items-center bg-[#0a246a] pl-[1px] text-white">20%</div>
            </div>
            <Sep className="ml-[3px]" />
            <CurveIcon className="ml-[3px]" />
            <Caret className="ml-[6px]" />
            <FlaskIcon className="ml-[5px]" />
            <Caret className="ml-[7px]" />
          </div>
        </div>
        <div className="flex w-[88px] shrink-0 items-center pt-[2px]">
          <div className="relative h-[72px] w-[72px] shrink-0 border-[4px] border-[#0a246a] bg-[#060606]">
            <svg width="11" height="11" viewBox="0 0 11 11" className="absolute left-[-1px] top-[1px]">
              <path d="M5.500 0v11M0 5.500h11M2 2l7 7M9 2l-7 7" stroke="#f0a020" />
              <circle cx="5.500" cy="5.500" r="3" fill="#f8c030" />
            </svg>
          </div>
          <svg width="11" height="10" viewBox="0 0 11 10" className="ml-[3px] shrink-0">
            <path d="M0 0h11v3H0z" fill="#8cc4f0" />
            <path d="M0 4h11L5.500 10z" fill="#3c96e8" />
          </svg>
        </div>
      </div>

      <TopRuler />

      {/* workspace */}
      <div className="flex h-[861px] shrink-0 bg-[#c0c0c0]">
        <LeftRuler />
        <div className="pl-[232px] pt-[30px]">
          <NoiseCanvas />
        </div>
      </div>

      {/* status bar */}
      <div className="flex h-[25px] shrink-0 items-center border-b border-t border-b-white border-t-white bg-gradient-to-r from-[#d6d3cc] to-[#f0efeb]">
        <svg width="16" height="16" viewBox="0 0 16 16" className="ml-[1px] shrink-0">
          <circle cx="8" cy="8" r="7.500" fill="#2a5cc0" stroke="#9ab0d8" />
          <text x="8" y="12" fontSize="11" fontWeight="bold" textAnchor="middle" fill="#fff" fontFamily="Liberation Sans, sans-serif">
            ?
          </text>
        </svg>
        <span className="ml-[3px] w-[977px] shrink-0 whitespace-nowrap tracking-[0.06px]">
          Заливка. Левая кнопка - заполнить область основным цветом, правая кнопка - дополнительным.
        </span>
        <svg width="16" height="18" viewBox="0 0 16 18" className="shrink-0">
          <path d="M.5 0v18" stroke="#a8a8a4" />
          <path d="M3 2h7M3 .5v3M10 .5v3M3 9v7M1.500 9h3M1.500 16h3" stroke="#2a78c8" />
          <path d="M6.500 7.500h5l3 3v6h-8z" fill="#fff" stroke="#8a9aa8" />
        </svg>
        <span className="ml-[6px] w-[111px] shrink-0 whitespace-nowrap tracking-[0.15px]">800 () x 800 ()</span>
        <svg width="20" height="18" viewBox="0 0 20 18" className="shrink-0">
          <path d="M.5 0v18" stroke="#a8a8a4" />
          <path d="M5 1v10M2 4h10" stroke="#2a78c8" strokeDasharray="1 1" />
          <path d="M6.500 7.500h5l3 3v6h-8z" fill="#fff" stroke="#8a9aa8" />
        </svg>
        <span className="ml-[3px] whitespace-nowrap tracking-[0.35px]">-36 (), -41 ()</span>
      </div>

      {/* taskbar */}
      <div className="flex h-[28px] shrink-0 items-center bg-[#d4d0c8] pb-[2px] pl-[2px]">
        <div className={`flex h-[22px] w-[51px] shrink-0 items-center bg-[#d4d0c8] pl-[3px] ${RAISED}`}>
          <svg width="16" height="15" viewBox="0 0 16 15" className="shrink-0">
            <path d="M1 2q3-1.500 6 0l-1 5Q3 6 0 7z" fill="#e8562a" />
            <path d="M8 2q3 1 6 0l-1 5q-3 1-6 0z" fill="#6cb830" />
            <path d="M0 8q3-1 6 0l-1 5q-3-1-6 0z" fill="#3a78d8" />
            <path d="M7 8q3 1 6 0l-1 5q-3 1-6 0z" fill="#f0c030" />
          </svg>
          <span className="ml-[1px] font-bold tracking-[0.2px]">Пуск</span>
        </div>
        <div className="ml-[4px] flex gap-[3px]">
          {tasks.map((t, i) => (
            <div key={i} className={`flex h-[22px] w-[155px] shrink-0 items-center bg-[#d4d0c8] pl-[5px] ${RAISED}`}>
              {t.icon}
              <span className="ml-[4px] overflow-hidden whitespace-nowrap tracking-[0.15px]">{t.text}</span>
            </div>
          ))}
          <div className={`ml-px flex h-[22px] w-[155px] shrink-0 items-center bg-[#f1efe9] pl-[5px] ${SUNKEN}`}>
            <PdnIcon />
            <span className="ml-[4px] overflow-hidden whitespace-nowrap font-bold tracking-[0.5px]">Безымянный (100%...</span>
          </div>
        </div>
        <div className="ml-[12px] flex h-[16px] w-[16px] shrink-0 items-center justify-center bg-[#0a246a] text-[11px] text-white">RU</div>
        <div className="ml-[5px] h-[22px] w-[2px] shrink-0 border-l border-r border-l-[#808080] border-r-white" />
        <div className="ml-[3px] flex h-[22px] flex-1 items-center pl-[6px] shadow-[inset_1px_1px_0_#808080,inset_-1px_-1px_0_#fff]">
          <span className="font-bold">«</span>
          <svg width="16" height="14" viewBox="0 0 16 14" className="ml-[6px] shrink-0">
            <path d="M1 2q7-2 14 0v3.500H1z" fill="#f4f4f4" />
            <path d="M1 5.500h14V9H1z" fill="#2850b8" />
            <path d="M1 9h14v3q-7 2-14 0z" fill="#d82828" />
          </svg>
          <span className="ml-[9px]">8:17</span>
        </div>
      </div>

      <ToolsWindow />
      <PaletteWindow />
      <JournalWindow />
      <LayersWindow />
      <NoiseDialog />
    </div>
  );
}
